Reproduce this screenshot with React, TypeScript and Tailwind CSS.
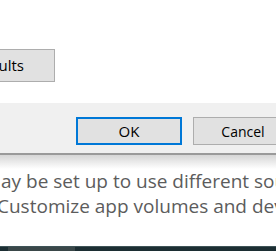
export default function App() {
  return (
    <div
      className="relative w-[276px] h-[251px] overflow-hidden bg-white"
      style={{ fontFamily: '"Open Sans", "Noto Sans", sans-serif' }}
    >
      {/* dialog body */}
      <div className="h-[103px] bg-white pt-[49px]">
        <div className="ml-[-2px] flex h-[33px] w-[57px] items-center justify-end border border-[#adadad] bg-[#e1e1e1] pr-[30px]">
          <span className="whitespace-nowrap text-[15px] leading-none text-black">Restore defaults</span>
        </div>
      </div>

      {/* dialog footer */}
      <div className="flex h-[52px] items-start gap-[11px] border-b-2 border-[#9a9a9a] bg-[#f0f0f0] pl-[76px] pt-[14px]">
        <button className="flex h-[28px] w-[106px] shrink-0 items-center justify-center border-2 border-[#0078d7] bg-[#e1e1e1] text-[15px] text-black">
          OK
        </button>
        <button className="flex h-[28px] w-[106px] shrink-0 items-center justify-center border border-[#adadad] bg-[#e1e1e1] pr-[6px] text-[14px] text-black">
          Cancel
        </button>
      </div>

      {/* shadow under dialog */}
      <div className="h-[14px] bg-gradient-to-b from-[#d6d6d6] to-white" />

      {/* page text behind */}
      <div className="whitespace-nowrap text-[19px] leading-[25px] text-[#5c5c5c]">
        <div className="ml-[1px]">ay be set up to use different sounds</div>
        <div className="ml-[-3px]">Customize app volumes and devices</div>
      </div>

      {/* taskbar edge */}
      <div className="absolute bottom-0 left-0 flex h-[5px] w-full border-t border-[#3e5357] bg-[#1c2e33]">
        <div className="ml-[8px] h-full w-[67px] bg-[#3a4749]" />
      </div>
    </div>
  );
}
